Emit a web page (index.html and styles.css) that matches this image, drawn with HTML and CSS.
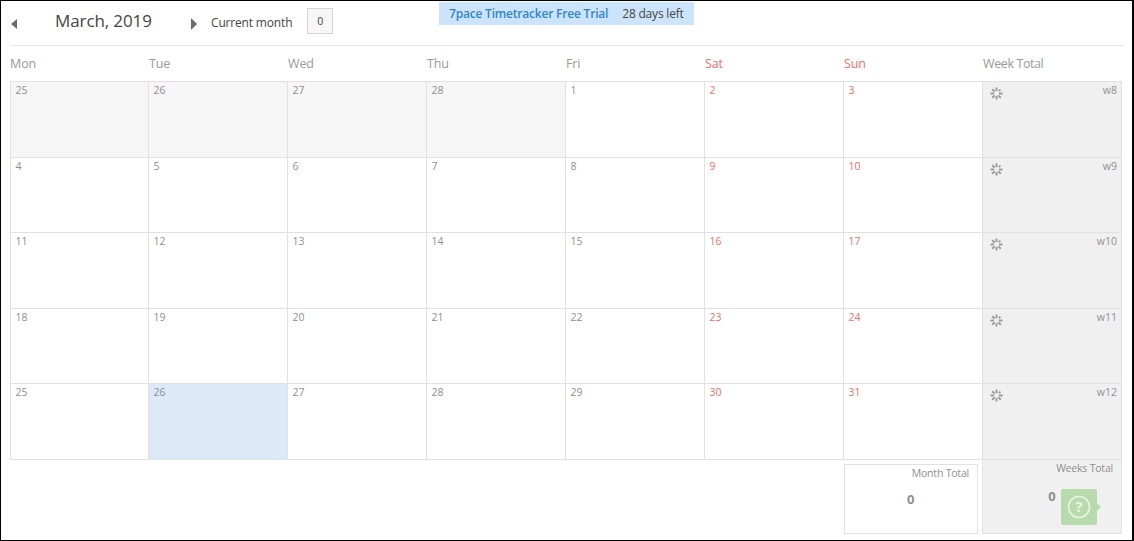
FILE: index.html
```html
<!DOCTYPE html>
<html lang="en">
<head>
<meta charset="utf-8">
<title>Timesheet</title>
<link rel="stylesheet" href="styles.css">
</head>
<body>
<div class="frame">
  <div class="trial"><b>7pace Timetracker Free Trial</b><span>28 days left</span></div>
  <header class="head">
    <svg class="arrow-l" width="6" height="10" viewBox="0 0 6 10"><path d="M6 0V10L0 5Z"/></svg>
    <h1 class="month">March, 2019</h1>
    <svg class="arrow-r" width="6" height="12" viewBox="0 0 6 12"><path d="M0 0V12L6 6Z"/></svg>
    <span class="cur">Current month</span>
    <span class="curval">0</span>
  </header>
  <div class="days">
    <span>Mon</span><span>Tue</span><span>Wed</span><span>Thu</span><span>Fri</span><span class="we">Sat</span><span class="we">Sun</span><span class="wtl">Week Total</span>
  </div>
  <div class="grid">
    <div class="c old">25</div><div class="c old">26</div><div class="c old">27</div><div class="c old">28</div><div class="c">1</div><div class="c we">2</div><div class="c we">3</div>
    <div class="c wk"><svg class="spin" viewBox="0 0 14 14"><use href="#sp"/></svg><span>w8</span></div>
    <div class="c">4</div><div class="c">5</div><div class="c">6</div><div class="c">7</div><div class="c">8</div><div class="c we">9</div><div class="c we">10</div>
    <div class="c wk"><svg class="spin" viewBox="0 0 14 14"><use href="#sp"/></svg><span>w9</span></div>
    <div class="c">11</div><div class="c">12</div><div class="c">13</div><div class="c">14</div><div class="c">15</div><div class="c we">16</div><div class="c we">17</div>
    <div class="c wk"><svg class="spin" viewBox="0 0 14 14"><use href="#sp"/></svg><span>w10</span></div>
    <div class="c">18</div><div class="c">19</div><div class="c">20</div><div class="c">21</div><div class="c">22</div><div class="c we">23</div><div class="c we">24</div>
    <div class="c wk"><svg class="spin" viewBox="0 0 14 14"><use href="#sp"/></svg><span>w11</span></div>
    <div class="c">25</div><div class="c today">26</div><div class="c">27</div><div class="c">28</div><div class="c">29</div><div class="c we">30</div><div class="c we">31</div>
    <div class="c wk"><svg class="spin" viewBox="0 0 14 14"><use href="#sp"/></svg><span>w12</span></div>
  </div>
  <div class="totals">
    <div class="mt"><span>Month Total</span><b>0</b></div>
    <div class="wt"><span>Weeks Total</span><b>0</b></div>
  </div>
  <div class="help"><svg width="26" height="26" viewBox="0 0 26 26"><circle cx="13" cy="13" r="10.5" fill="none" stroke="#e9f4e5" stroke-width="1.6"/><text x="13" y="18" text-anchor="middle" class="q">?</text></svg></div>
</div>
<svg class="defs" width="0" height="0"><defs><g id="sp" stroke="#999" stroke-width="2"><path d="M7 0.5V4.5"/><path d="M2.4 2.4L5 5" /><path d="M11.2 2.8L9.5 4.5"/><path d="M0.5 7H4.5"/><path d="M9.5 7H13.5"/><path d="M2.4 11.6L5 9"/><path d="M11.6 11.6L9 9"/><path d="M7 9.5V13.5"/></g></defs></svg>
</body>
</html>
```
FILE: styles.css
```css
* { box-sizing: border-box; }
html, body { margin: 0; height: 100%; background: #fff; overflow: hidden; }
body { font-family: "Open Sans", "Noto Sans", sans-serif; color: #8a8a8a; }
.defs { position: absolute; }
.frame {
  position: relative;
  width: 1134px;
  height: 541px;
  border: 1px solid #000;
  border-right-width: 2px;
  padding-left: 9px;
}
.trial {
  position: absolute;
  left: 438px;
  top: 1px;
  width: 255px;
  height: 23px;
  background: #cce4fb;
  display: flex;
  align-items: center;
  gap: 14px;
  padding-left: 10px;
  font-size: 12px;
  color: #444;
  letter-spacing: -.2px;
}
.trial b { font-weight: 600; color: #2f86d0; }
.head {
  display: flex;
  align-items: center;
  height: 45px;
  width: 1114px;
  border-bottom: 1px solid #e6e6e6;
  color: #444;
}
.arrow-l { fill: #6b6b6b; margin-left: 1px; margin-top: 1px; }
.month { margin: 0 0 0 38px; font-size: 17px; font-weight: 400; width: 136px; color: #444; letter-spacing: -.1px; padding-bottom: 5px; }
.arrow-r { fill: #6b6b6b; margin-top: 1px; }
.cur { margin-left: 14px; font-size: 12px; letter-spacing: -.17px; padding-bottom: 1px; }
.curval {
  margin-left: 15px;
  width: 26px;
  height: 26px;
  border: 1px solid #d4d4d4;
  background: #f7f7f7;
  font-size: 10.5px;
  display: flex;
  align-items: center;
  justify-content: center;
  margin-bottom: 4px;
}
.days {
  display: grid;
  grid-template-columns: repeat(8, 139px);
  height: 35px;
  align-items: center;
  font-size: 12.5px;
  color: #999;
  letter-spacing: -.1px;
}
.days .we { color: #f26d6d; }
.days .wtl { letter-spacing: -.4px; }
.grid {
  display: grid;
  grid-template-columns: 138px repeat(7, 139px);
  grid-auto-rows: 75.6px;
  width: 1112px;
  border-left: 1px solid #e2e2e2;
  border-top: 1px solid #e2e2e2;
  height: 379px;
}
.c {
  border-right: 1px solid #e2e2e2;
  border-bottom: 1px solid #e2e2e2;
  padding: 1px 0 0 4.5px;
  font-size: 10.5px;
  color: #8f8f8f;
  line-height: 15px;
}
.c.we { color: #f26d6d; }
.c.old { background: #f6f6f6; }
.c.today { background: #dbe9f9; }
.wk {
  background: #f0f0f0;
  display: flex;
  justify-content: space-between;
  align-items: flex-start;
  padding: 1px 4px 0 7px;
}
.spin { width: 13px; height: 13px; margin-top: 4px; }
.totals {
  display: flex;
  justify-content: flex-end;
  width: 1112px;
  height: 74px;
}
.mt, .wt { display: flex; flex-direction: column; font-size: 10.5px; color: #8f8f8f; letter-spacing: -.2px; }
.mt {
  width: 134px;
  height: 70px;
  margin: 4px 4px 0 0;
  border: 1px solid #e2e2e2;
  padding: 1px 8px 0 0;
  text-align: right;
}
.mt b { text-align: center; font-size: 13px; margin: 10px 0 0 7px; font-weight: 700; }
.wt {
  width: 140px;
  background: #f0f0f0;
  border: 1px solid #e4e4e4;
  border-top: 0;
  padding: 1px 8px 0 0;
  text-align: right;
}
.wt b { text-align: center; font-size: 13px; margin: 12px 0 0 8px; font-weight: 700; letter-spacing: 0; }
.help {
  position: absolute;
  left: 1060px;
  top: 488px;
  width: 36px;
  height: 36px;
  background: #b8dbad;
  border-radius: 2px;
  display: flex;
  align-items: center;
  justify-content: center;
}
.help::after {
  content: "";
  position: absolute;
  right: -4px;
  top: 14px;
  border-left: 4px solid #b8dbad;
  border-top: 4px solid transparent;
  border-bottom: 4px solid transparent;
}
.q { font-size: 15px; font-weight: 700; fill: #e9f4e5; font-family: "Open Sans", sans-serif; }
```
